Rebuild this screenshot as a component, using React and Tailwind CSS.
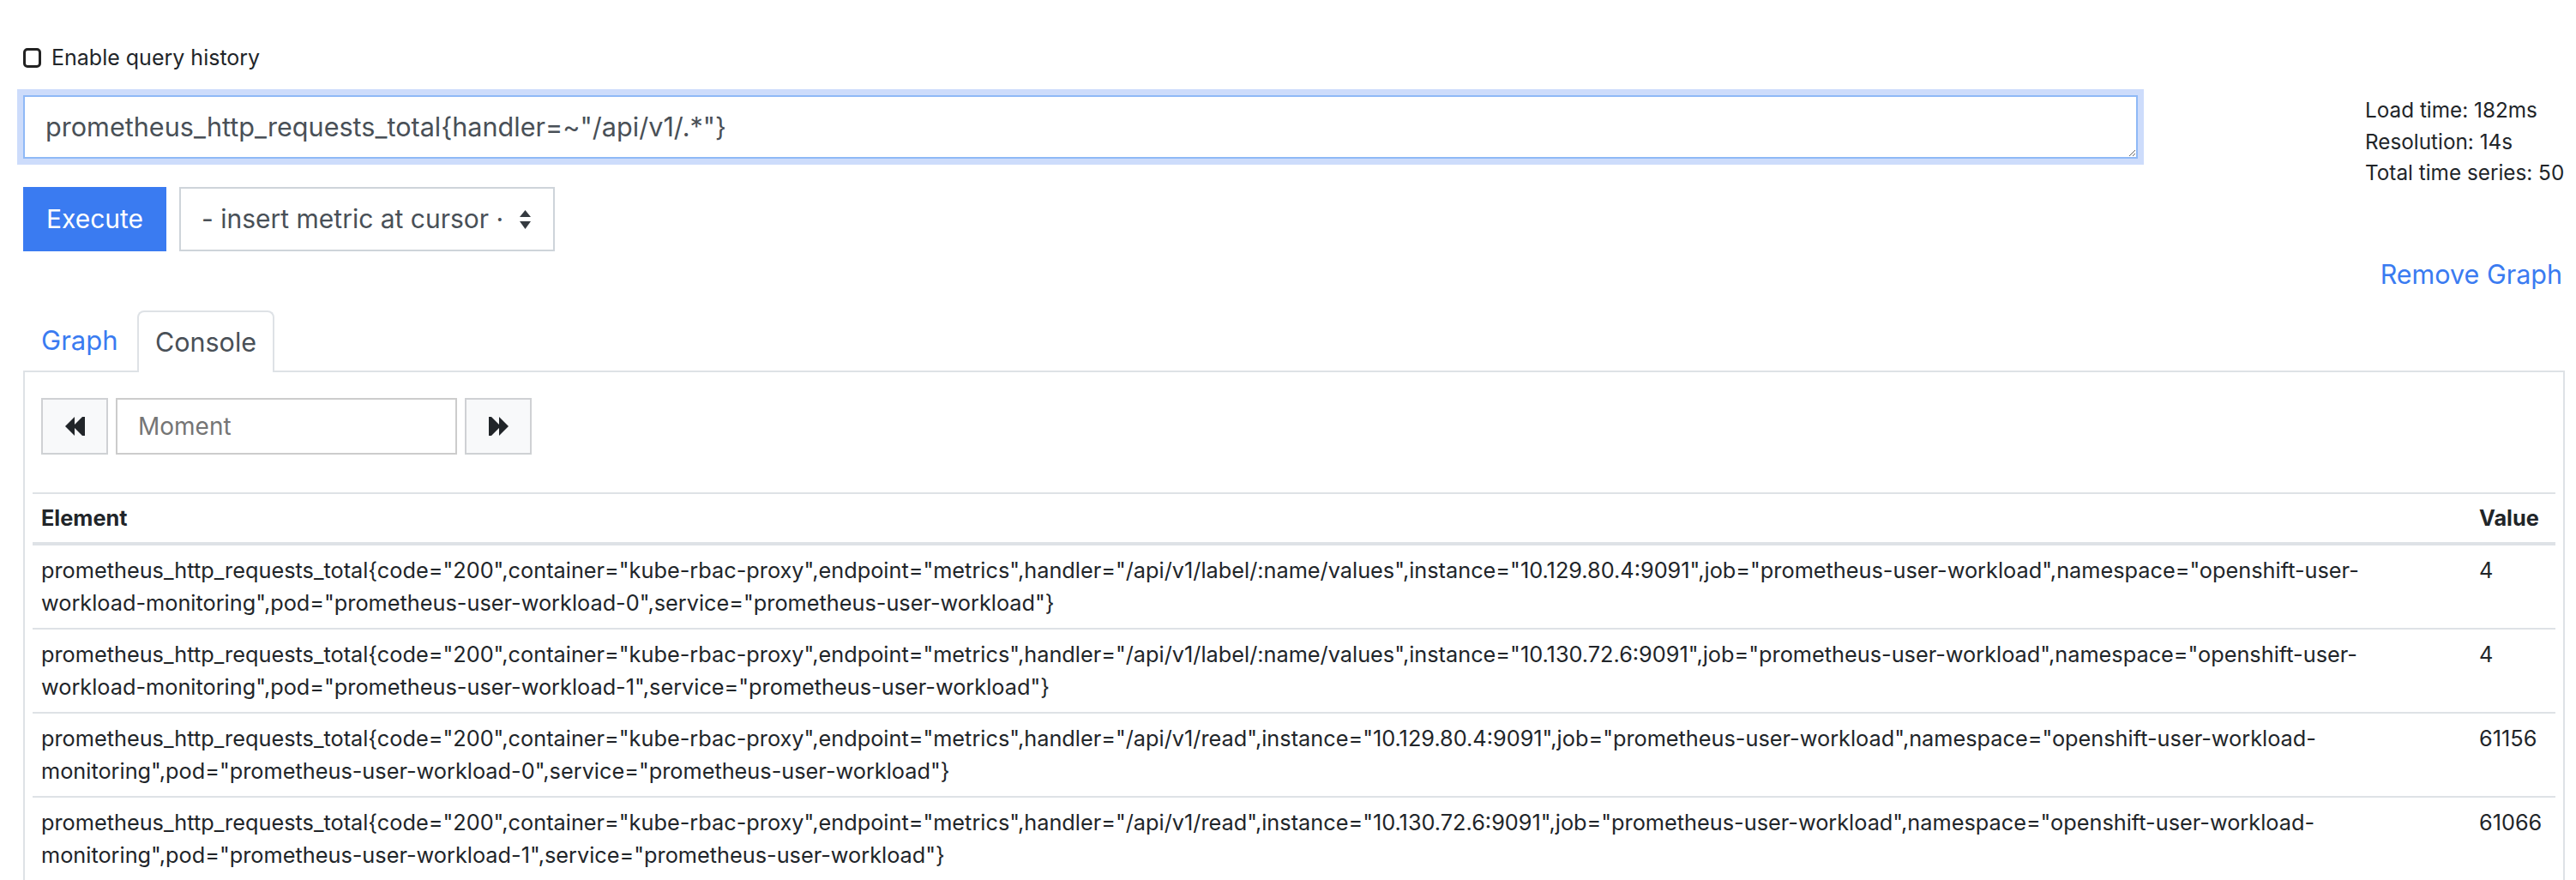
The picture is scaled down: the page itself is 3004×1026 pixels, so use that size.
import React from "react";

const rows = [
  {
    l1: 'prometheus_http_requests_total{code="200",container="kube-rbac-proxy",endpoint="metrics",handler="/api/v1/label/:name/values",instance="10.129.80.4:9091",job="prometheus-user-workload",namespace="openshift-user-',
    l2: 'workload-monitoring",pod="prometheus-user-workload-0",service="prometheus-user-workload"}',
    v: "4",
  },
  {
    l1: 'prometheus_http_requests_total{code="200",container="kube-rbac-proxy",endpoint="metrics",handler="/api/v1/label/:name/values",instance="10.130.72.6:9091",job="prometheus-user-workload",namespace="openshift-user-',
    l2: 'workload-monitoring",pod="prometheus-user-workload-1",service="prometheus-user-workload"}',
    v: "4",
  },
  {
    l1: 'prometheus_http_requests_total{code="200",container="kube-rbac-proxy",endpoint="metrics",handler="/api/v1/read",instance="10.129.80.4:9091",job="prometheus-user-workload",namespace="openshift-user-workload-',
    l2: 'monitoring",pod="prometheus-user-workload-0",service="prometheus-user-workload"}',
    v: "61156",
  },
  {
    l1: 'prometheus_http_requests_total{code="200",container="kube-rbac-proxy",endpoint="metrics",handler="/api/v1/read",instance="10.130.72.6:9091",job="prometheus-user-workload",namespace="openshift-user-workload-',
    l2: 'monitoring",pod="prometheus-user-workload-1",service="prometheus-user-workload"}',
    v: "61066",
  },
];

function Backward() {
  return (
    <svg width="23" height="22" viewBox="0 0 23 22">
      <polygon points="0,11 11,0 11,22" fill="#212529" />
      <polygon points="9,11 20,0 20,22" fill="#212529" />
      <rect x="20" y="0" width="3" height="22" fill="#212529" />
    </svg>
  );
}

function Forward() {
  return (
    <svg width="23" height="22" viewBox="0 0 23 22">
      <rect x="0" y="0" width="3" height="22" fill="#212529" />
      <polygon points="3,0 14,11 3,22" fill="#212529" />
      <polygon points="12,0 23,11 12,22" fill="#212529" />
    </svg>
  );
}

export default function App() {
  return (
    <div className="min-h-screen bg-white font-['Inter','Liberation_Sans',sans-serif] text-[#212529] pl-[27px] pr-[13px] pt-[56px]">
      {/* query history */}
      <div className="flex items-center h-[23px] gap-[12px]">
        <div className="w-[21px] h-[23px] rounded-[5px] border-[3px] border-[#222] bg-white" />
        <span className="text-[25px] leading-[23px]">Enable query history</span>
      </div>

      {/* expression row */}
      <div className="mt-[32px] flex justify-between items-start">
        <div className="w-[2466px]">
          <textarea
            rows={1}
            readOnly
            defaultValue={'prometheus_http_requests_total{handler=~"/api/v1/.*"}'}
            className="block w-full h-[74px] border-2 border-[#8fb9f6] shadow-[0_0_0_7px_#cddcfb] outline-none pl-[24px] pt-[12px] text-[30.6px] leading-[45px] text-[#495057] font-['Inter','Liberation_Sans',sans-serif] resize-y overflow-hidden"
          />
          <div className="mt-[33px] flex gap-[15px]">
            <button className="w-[167px] h-[75px] bg-[#3a7bf1] text-white text-[30px] font-normal">
              Execute
            </button>
            <div className="w-[438px] h-[75px] border-2 border-[#ced4da] flex items-center pl-[24px] pr-[26px] text-[30px] text-[#495057]">
              <span className="flex-1 whitespace-nowrap overflow-hidden">- insert metric at cursor ·</span>
              <svg width="13" height="22" viewBox="0 0 13 22">
                <polygon points="6.5,0 13,8 0,8" fill="#343a40" />
                <polygon points="0,13 13,13 6.5,22" fill="#343a40" />
              </svg>
            </div>
          </div>
        </div>
        <div className="w-[233px] text-[24.3px] leading-[36.5px] -mt-[1px] whitespace-nowrap">
          <div>Load time: 182ms</div>
          <div>Resolution: 14s</div>
          <div>Total time series: 50</div>
        </div>
      </div>

      {/* remove graph */}
      <div className="mt-[4px] flex justify-end pr-[3px]">
        <span className="text-[30.5px] leading-[46px] text-[#3a7bf1]">Remove Graph</span>
      </div>

      {/* tabs */}
      <div className="mt-[19px] flex items-end">
        <div className="w-[133px] h-[70px] flex items-center pl-[21px] text-[31px] text-[#3a7bf1]">Graph</div>
        <div className="w-[160px] h-[72px] -mb-[2px] border-2 border-b-0 border-[#dee2e6] rounded-t-[8px] bg-white flex items-center justify-center text-[30.5px] text-[#495057] relative z-10">
          Console
        </div>
        <div className="flex-1" />
      </div>

      {/* tab content */}
      <div className="border-2 border-[#dee2e6] px-[9px] pt-[30px]">
        <div className="pl-[10px] flex gap-[9px] h-[66px]">
          <div className="w-[78px] h-[66px] bg-[#f8f9fa] border-2 border-[#cfd1d4] flex items-center justify-center">
            <Backward />
          </div>
          <div className="w-[398px] h-[66px] border-2 border-[#cccccc] flex items-center pl-[24px] text-[28px] text-[#757575]">
            Moment
          </div>
          <div className="w-[78px] h-[66px] bg-[#f8f9fa] border-2 border-[#cfd1d4] flex items-center justify-center">
            <Forward />
          </div>
        </div>

        <table className="mt-[44px] w-full border-collapse text-[25.3px]">
          <thead>
            <tr className="border-t-2 border-b-4 border-[#dee2e6]">
              <th className="text-left font-bold px-[10px] py-[9px] leading-[38px]">Element</th>
              <th className="text-left font-bold w-[99px] px-[10px] py-[9px] leading-[38px]">Value</th>
            </tr>
          </thead>
          <tbody>
            {rows.map((r, i) => (
              <tr key={i} className="border-b-2 border-[#dee2e6]">
                <td className="px-[10px] py-[10px] leading-[38px] align-top">
                  <div className="whitespace-nowrap">{r.l1}</div>
                  <div className="whitespace-nowrap">{r.l2}</div>
                </td>
                <td className="px-[10px] py-[10px] leading-[38px] align-top w-[99px]">{r.v}</td>
              </tr>
            ))}
          </tbody>
        </table>
      </div>
    </div>
  );
}
